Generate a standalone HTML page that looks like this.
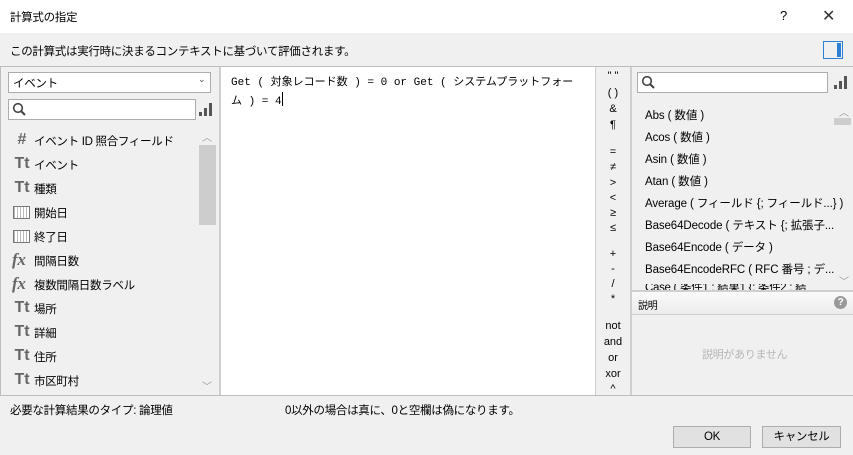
<!DOCTYPE html>
<html><head><meta charset="utf-8">
<style>
*{margin:0;padding:0;box-sizing:border-box}
body{width:853px;height:455px;overflow:hidden;background:#f0f0f0;font-family:"Liberation Sans","Noto Sans CJK JP",sans-serif;font-size:11.5px;letter-spacing:-0.3px;color:#000;position:relative}
.a{position:absolute;white-space:nowrap}
.ic{position:absolute;left:13px;width:18px;text-align:center;color:#666;font-weight:bold;font-size:16px;letter-spacing:0}
.cal{position:absolute;left:13px;width:17px;height:13px;border:1px solid #777;background:repeating-linear-gradient(90deg,#bbb 0 1px,#fff 1px 3px)}
.fx{position:absolute;left:12px;color:#666;font-family:"Liberation Serif",serif;font-style:italic;font-weight:bold;font-size:17px}
.it{position:absolute;left:34px;white-space:nowrap}
.fn{position:absolute;left:645px;white-space:nowrap;letter-spacing:-0.1px}
.op{position:absolute;left:596px;width:34px;text-align:center;font-size:11px;letter-spacing:0}
.btn{position:absolute;height:22px;border:1px solid #adadad;background:#e1e1e1;text-align:center;line-height:20px}
</style></head><body>
<div class="a" style="left:0;top:0;width:853px;height:33px;background:#fff"></div>
<div class="a" style="left:10px;top:9px">計算式の指定</div>
<div class="a" style="left:780px;top:8px;font-size:13px">?</div>
<div class="a" style="left:822px;top:6px;font-size:16px;color:#333">✕</div>
<div class="a" style="left:10px;top:43px">この計算式は実行時に決まるコンテキストに基づいて評価されます。</div>
<div class="a" style="left:823px;top:41px;width:20px;height:18px;border:1px solid #2b7fd4"></div>
<div class="a" style="left:837px;top:43px;width:4px;height:14px;background:#2b7fd4"></div>
<div class="a" style="left:0;top:66px;width:853px;height:1px;background:#bdbdbd"></div>

<div class="a" style="left:0;top:67px;width:1px;height:328px;background:#bdbdbd"></div>
<div class="a" style="left:219px;top:67px;width:2px;height:328px;background:#cfcfcf"></div>
<div class="a" style="left:8px;top:72px;width:203px;height:21px;border:1px solid #adadad;background:#fff"></div>
<div class="a" style="left:13px;top:75px">イベント</div>
<div class="a" style="left:198px;top:74px;font-size:9px;color:#555">⌄</div>
<div class="a" style="left:8px;top:99px;width:188px;height:21px;border:1px solid #adadad;background:#fff"></div>
<svg class="a" style="left:12px;top:102px" width="14" height="14"><circle cx="6" cy="6" r="4.3" fill="none" stroke="#444" stroke-width="1.6"/><line x1="9" y1="9" x2="13" y2="13" stroke="#444" stroke-width="2"/></svg>
<svg class="a" style="left:199px;top:101px" width="14" height="16"><rect x="0" y="11" width="3" height="4" fill="#555"/><rect x="5" y="7" width="3" height="8" fill="#555"/><rect x="10" y="2" width="3" height="13" fill="#555"/></svg>
<div class="a" style="left:199px;top:145px;width:17px;height:80px;background:#cdcdcd"></div>
<div class="a" style="left:202px;top:129px;font-size:10px;color:#999">︿</div>
<div class="a" style="left:202px;top:378px;font-size:10px;color:#999">﹀</div>

<div class="ic" style="top:131px">#</div><div class="it" style="top:133px">イベント ID 照合フィールド</div>
<div class="ic" style="top:155px">Tt</div><div class="it" style="top:157px">イベント</div>
<div class="ic" style="top:179px">Tt</div><div class="it" style="top:181px">種類</div>
<div class="cal" style="top:206px"></div><div class="it" style="top:205px">開始日</div>
<div class="cal" style="top:230px"></div><div class="it" style="top:229px">終了日</div>
<div class="fx" style="top:250px">fx</div><div class="it" style="top:253px">間隔日数</div>
<div class="fx" style="top:274px">fx</div><div class="it" style="top:277px">複数間隔日数ラベル</div>
<div class="ic" style="top:299px">Tt</div><div class="it" style="top:301px">場所</div>
<div class="ic" style="top:323px">Tt</div><div class="it" style="top:325px">詳細</div>
<div class="ic" style="top:347px">Tt</div><div class="it" style="top:349px">住所</div>
<div class="ic" style="top:371px">Tt</div><div class="it" style="top:373px">市区町村</div>

<div class="a" style="left:221px;top:67px;width:374px;height:328px;background:#fff"></div>
<div class="a" style="left:231px;top:75px;font-family:'Liberation Mono','Noto Sans CJK JP',monospace;font-size:11px;letter-spacing:0;line-height:17px">Get ( 対象レコード数 ) = 0 or Get ( システムプラットフォー<br>ム ) = 4<span style="display:inline-block;width:1px;height:14px;background:#000;vertical-align:-2px"></span></div>
<div class="a" style="left:595px;top:67px;width:1px;height:328px;background:#cfcfcf"></div>
<div class="a" style="left:630px;top:67px;width:2px;height:328px;background:#cfcfcf"></div>

<div class="op" style="top:70px">" "</div>
<div class="op" style="top:87px">( )</div>
<div class="op" style="top:103px">&amp;</div>
<div class="op" style="top:119px">¶</div>
<div class="op" style="top:146px">=</div>
<div class="op" style="top:161px">≠</div>
<div class="op" style="top:177px">&gt;</div>
<div class="op" style="top:192px">&lt;</div>
<div class="op" style="top:207px">≥</div>
<div class="op" style="top:222px">≤</div>
<div class="op" style="top:248px">+</div>
<div class="op" style="top:263px">-</div>
<div class="op" style="top:278px">/</div>
<div class="op" style="top:293px">*</div>
<div class="op" style="top:320px">not</div>
<div class="op" style="top:336px">and</div>
<div class="op" style="top:352px">or</div>
<div class="op" style="top:368px">xor</div>
<div class="op" style="top:383px">^</div>

<div class="a" style="left:637px;top:72px;width:191px;height:21px;border:1px solid #adadad;background:#fff"></div>
<svg class="a" style="left:641px;top:75px" width="14" height="14"><circle cx="6" cy="6" r="4.3" fill="none" stroke="#444" stroke-width="1.6"/><line x1="9" y1="9" x2="13" y2="13" stroke="#444" stroke-width="2"/></svg>
<svg class="a" style="left:834px;top:74px" width="14" height="16"><rect x="0" y="11" width="3" height="4" fill="#555"/><rect x="5" y="7" width="3" height="8" fill="#555"/><rect x="10" y="2" width="3" height="13" fill="#555"/></svg>
<div class="a" style="left:834px;top:118px;width:17px;height:7px;background:#cdcdcd"></div>
<div class="a" style="left:839px;top:104px;font-size:10px;color:#999">︿</div>
<div class="a" style="left:839px;top:273px;font-size:10px;color:#999">﹀</div>
<div class="fn" style="top:107px">Abs ( 数値 )</div>
<div class="fn" style="top:129px">Acos ( 数値 )</div>
<div class="fn" style="top:151px">Asin ( 数値 )</div>
<div class="fn" style="top:173px">Atan ( 数値 )</div>
<div class="fn" style="top:195px">Average ( フィールド {; フィールド...} )</div>
<div class="fn" style="top:217px">Base64Decode ( テキスト {; 拡張子...</div>
<div class="fn" style="top:239px">Base64Encode ( データ )</div>
<div class="fn" style="top:261px">Base64EncodeRFC ( RFC 番号 ; デ...</div>
<div class="a" style="left:632px;top:284px;width:200px;height:6px;overflow:hidden"><div style="position:absolute;left:13px;top:-5px">Case ( 条件1 ; 結果1 {; 条件2 ; 結</div></div>
<div class="a" style="left:632px;top:290px;width:221px;height:2px;background:#cfcfcf"></div>
<div class="a" style="left:632px;top:292px;width:221px;height:22px;background:linear-gradient(#fafafa,#ececec)"></div>
<div class="a" style="left:638px;top:297px;font-size:10px">説明</div>
<div class="a" style="left:834px;top:296px;width:13px;height:13px;border-radius:50%;background:#999;color:#fff;font-size:10px;font-weight:bold;text-align:center;line-height:13px">?</div>
<div class="a" style="left:632px;top:314px;width:221px;height:1px;background:#cfcfcf"></div>
<div class="a" style="left:702px;top:346px;font-size:11px;color:#b5b5b5">説明がありません</div>

<div class="a" style="left:0;top:395px;width:853px;height:1px;background:#bdbdbd"></div>
<div class="a" style="left:10px;top:402px">必要な計算結果のタイプ: 論理値</div>
<div class="a" style="left:285px;top:402px">0以外の場合は真に、0と空欄は偽になります。</div>
<div class="btn" style="left:673px;top:426px;width:78px">OK</div>
<div class="btn" style="left:762px;top:426px;width:79px">キャンセル</div>
</body></html>
